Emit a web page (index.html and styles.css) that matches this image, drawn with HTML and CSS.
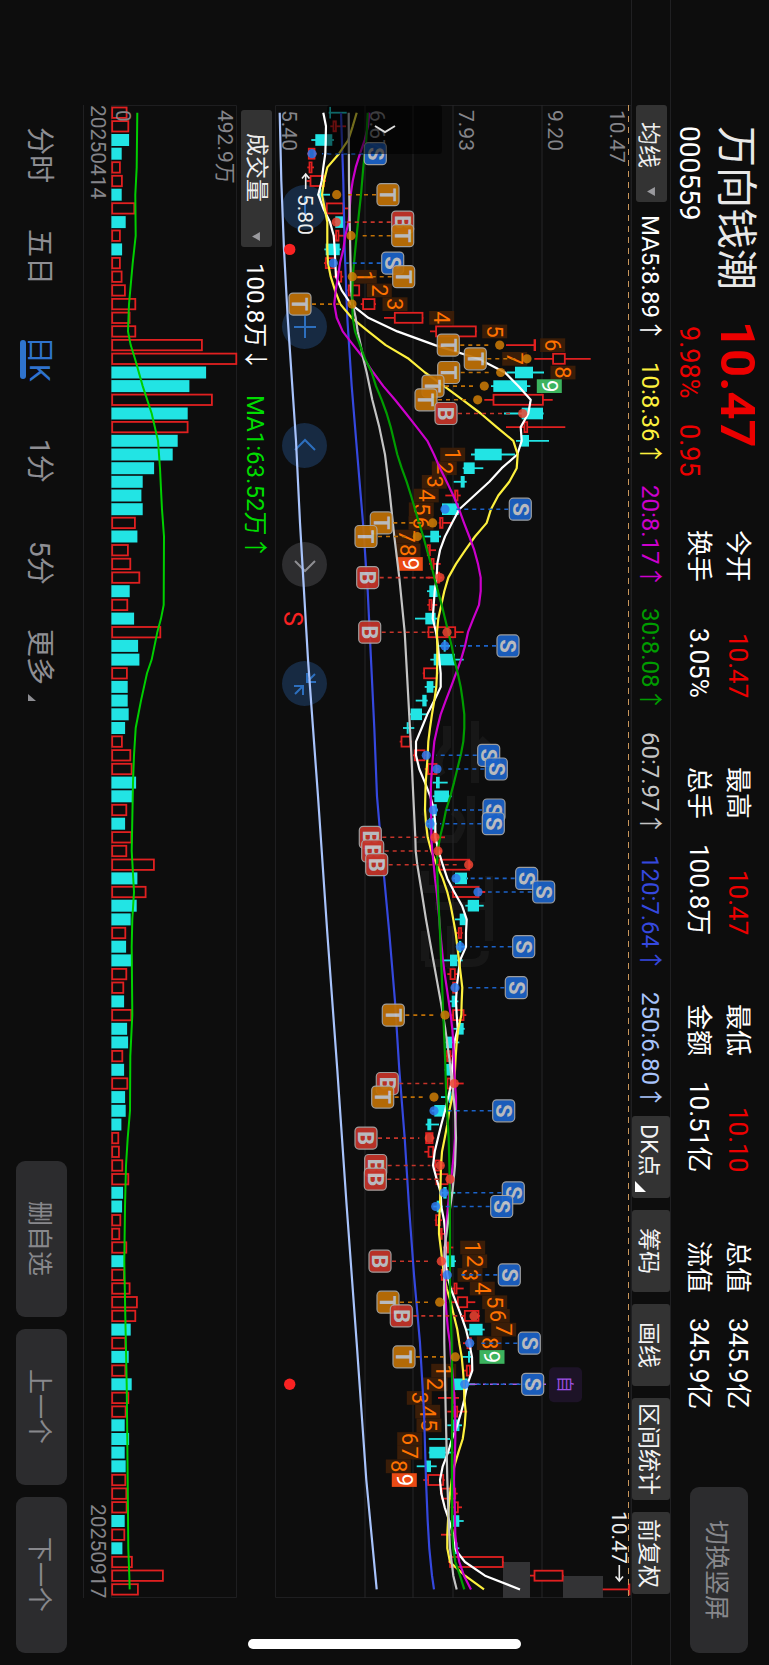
FILE: index.html
```html
<!DOCTYPE html>
<html lang="zh-CN">
<head>
<meta charset="utf-8">
<meta name="viewport" content="width=device-width, initial-scale=1">
<title>万向钱潮 000559</title>
<link rel="stylesheet" href="styles.css">
</head>
<body>
<main class="screen">
  <header class="quote">
    <div class="identity">
      <h1 class="name">万向钱潮</h1>
      <strong class="price">10.47</strong>
      <span class="code">000559</span>
      <span class="change"><span>9.98%</span><span>0.95</span></span>
    </div>
    <dl class="stats">
      <div class="stat"><dt>今开</dt><dd class="up">10.47</dd></div>
      <div class="stat"><dt>换手</dt><dd>3.05%</dd></div>
      <div class="stat"><dt>最高</dt><dd class="up">10.47</dd></div>
      <div class="stat"><dt>总手</dt><dd>100.8万</dd></div>
      <div class="stat"><dt>最低</dt><dd class="up">10.10</dd></div>
      <div class="stat"><dt>金额</dt><dd>10.51亿</dd></div>
      <div class="stat"><dt>总值</dt><dd>345.9亿</dd></div>
      <div class="stat"><dt>流值</dt><dd>345.9亿</dd></div>
    </dl>
    <button class="soft-button rotate-button" type="button">切换竖屏</button>
  </header>

  <section class="toolbar">
    <button class="picker" type="button" aria-haspopup="true">均线<svg class="caret" viewBox="0 0 7 8"><path d="M0 4 7 0V8Z"/></svg></button>
    <div class="averages">
      <span class="ma5">MA5:8.89<i>↑</i></span>
      <span class="ma10">10:8.36<i>↑</i></span>
      <span class="ma20">20:8.17<i>↑</i></span>
      <span class="ma30">30:8.08<i>↑</i></span>
      <span class="ma60">60:7.97<i>↑</i></span>
      <span class="ma120">120:7.64<i>↑</i></span>
      <span class="ma250">250:6.80<i>↑</i></span>
    </div>
    <div class="tools">
      <button class="tool has-corner" type="button">DK点<svg class="corner" viewBox="0 0 11 11"><path d="M0 0V11H11Z"/></svg></button>
      <button class="tool" type="button">筹码</button>
      <button class="tool" type="button">画线</button>
      <button class="tool" type="button">区间统计</button>
      <button class="tool" type="button">前复权</button>
    </div>
  </section>

  <section class="plot price-plot">
    <div class="chart-controls">
      <button class="round" type="button" aria-label="缩小"><svg viewBox="0 0 24 24"><path d="M12 1V23"/></svg></button>
      <button class="round" type="button" aria-label="放大"><svg viewBox="0 0 24 24"><path d="M12 1V23M1 12H23"/></svg></button>
      <button class="round" type="button" aria-label="左移"><svg viewBox="0 0 24 24"><path d="M2 16 12 6 22 16"/></svg></button>
      <button class="round idle" type="button" aria-label="右移"><svg viewBox="0 0 24 24"><path d="M2 8 12 18 22 8"/></svg></button>
      <button class="round" type="button" aria-label="收起"><svg viewBox="0 0 24 24"><path d="M14 1V10H23M22 2 14 10M1 14H10V23M2 22 10 14"/></svg></button>
    </div>
    <svg id="price" class="chart" viewBox="0 0 356 1493" role="img" aria-label="日K线"></svg>
    <button class="back" type="button" aria-label="返回"><svg viewBox="0 0 22 9"><path d="M1 1 11 7 21 1"/></svg></button>
  </section>

  <section class="volume-bar">
    <button class="picker wide" type="button" aria-haspopup="true">成交量<svg class="caret" viewBox="0 0 7 8"><path d="M0 4 7 0V8Z"/></svg></button>
    <span>100.8万<i>↓</i></span>
    <span class="vol-ma">MA1:63.52万<i>↑</i></span>
  </section>

  <section class="plot volume-plot">
    <svg id="volume" class="chart" viewBox="0 0 126 1493" role="img" aria-label="成交量"></svg>
  </section>

  <div class="dates"><time>20250414</time><time>20250917</time></div>

  <footer class="bottom">
    <nav class="tabs">
      <button class="tab" type="button">分时</button>
      <button class="tab" type="button">五日</button>
      <button class="tab active" type="button">日K</button>
      <button class="tab" type="button">1分</button>
      <button class="tab" type="button">5分</button>
      <button class="tab" type="button">更多<svg class="more" viewBox="0 0 8 7"><path d="M0 0V7H8Z"/></svg></button>
    </nav>
    <div class="actions">
      <button class="soft-button" type="button">删自选</button>
      <button class="soft-button" type="button">上一个</button>
      <button class="soft-button" type="button">下一个</button>
    </div>
  </footer>
  <div class="home-indicator"></div>
</main>
<script src="chart.js"></script>
</body>
</html>
```

FILE: styles.css
```css
* { box-sizing: border-box; }

body {
  margin: 0;
  background: #0d0d0d;
  color: #fff;
  font-family: Roboto, "Noto Sans CJK SC", sans-serif;
}

.screen {
  position: relative;
  writing-mode: vertical-rl;
  text-orientation: sideways;
  display: flex;
  flex-direction: column;
  width: 100vw;
  height: 100vh;
  overflow: hidden;
}

button {
  border: 0;
  margin: 0;
  padding: 0;
  background: none;
  color: inherit;
  font: inherit;
  writing-mode: vertical-rl;
  text-orientation: sideways;
  white-space: nowrap;
}

h1, dl, dd { margin: 0; }
i { font-family: "Noto Sans CJK SC", sans-serif; font-style: normal; }

/* quote header */
.quote {
  flex: none;
  display: flex;
  width: 99px;
  padding-inline: 126px 12px;
  border-left: 1px solid #202022;
}
.identity {
  flex: none;
  display: grid;
  grid-template-columns: 195px 1fr;
  grid-template-rows: 58px 36px;
  width: 98px;
  height: 404px;
  padding-right: 4px;
  white-space: nowrap;
}
.name { font-size: 41px; font-weight: 400; line-height: 58px; color: #e8e8e8; }
.price { font-size: 49px; line-height: 56px; color: #ec0000; }
.code { font-size: 28px; line-height: 36px; }
.change { display: flex; gap: 26px; padding-top: 5px; font-size: 27px; line-height: 36px; color: #ec0000; }
.stats {
  flex: 1;
  display: grid;
  grid-auto-flow: column;
  grid-template-columns: repeat(4, 168px);
  grid-template-rows: 39px 39px;
  justify-content: space-between;
  align-content: start;
  padding-right: 12px;
  font-size: 26px;
  line-height: 39px;
  white-space: nowrap;
}
.stat { display: flex; justify-content: space-between; }
.up { color: #ec0000; }
.soft-button {
  border-radius: 9px;
  background: #2c2c2e;
  color: #88888c;
  font-size: 25px;
}
.rotate-button { flex: none; width: 58px; height: 166px; margin: 78px 21px 0 0; }

/* indicator toolbar */
.toolbar {
  flex: none;
  display: flex;
  align-items: center;
  width: 39px;
  padding-inline: 105px 71px;
  border-left: 1px solid #202022;
}
.picker {
  flex: none;
  display: flex;
  align-items: center;
  justify-content: space-between;
  width: 31px;
  height: 97px;
  padding-block: 0;
  padding-inline: 17px 6px;
  border-radius: 3px;
  background: #333;
  color: #eee;
  font-size: 23px;
}
.picker.wide { height: 137px; padding-inline: 23px 6px; }
.caret { width: 8px; height: 9px; fill: #9a9a9e; }
.averages {
  flex: 1;
  display: flex;
  justify-content: space-between;
  padding-inline: 13px 7px;
  font-size: 24px;
  line-height: 38px;
  white-space: nowrap;
}
.ma10 { color: #fdf03e; }
.ma20 { color: #cc00cc; }
.ma30 { color: #009c00; }
.ma60 { color: #c4c4c4; }
.ma120 { color: #3548de; }
.ma250 { color: #a8c3fb; }
.tools { display: flex; gap: 12px; }
.tool {
  position: relative;
  min-height: 82px;
  width: 38px;
  padding-inline: 5px;
  border-radius: 3px;
  background: #333;
  color: #f2f2f2;
  font-size: 23px;
}
.has-corner { padding-inline: 5px 18px; }
.corner { position: absolute; left: 3px; bottom: 6px; width: 11px; height: 11px; fill: #fff; }

/* plots */
.plot { position: relative; min-width: 0; padding-inline: 105px 67px; }
.price-plot { flex: 356 1 0; }
.volume-plot { flex: 126 1 0; }
.chart {
  position: relative;
  display: block;
  width: 100%;
  height: 100%;
  writing-mode: horizontal-tb;
  overflow: visible;
}
.chart-controls {
  position: absolute;
  left: 7px;
  top: 185px;
  display: flex;
  gap: 74px;
}
.round {
  display: grid;
  place-items: center;
  width: 45px;
  height: 45px;
  border-radius: 50%;
  background: #172a42;
}
.round svg { width: 24px; height: 24px; fill: none; stroke: #2d6fbe; stroke-width: 2; }
.round.idle { background: #2d2d2f; }
.round.idle svg { stroke: #8e8e93; }
.back {
  position: absolute;
  left: 52px;
  top: 105px;
  display: grid;
  place-items: center;
  width: 115px;
  height: 49px;
  border-radius: 3px;
  background: rgba(0, 0, 0, 0.55);
}
.back svg { width: 22px; height: 9px; fill: none; stroke: #ddd; stroke-width: 2; }

.grid { stroke: #262628; stroke-width: 1; }
.edge { fill: none; stroke: #1e1e20; }
.limit { stroke: #c9965a; stroke-width: 1; stroke-dasharray: 6 5; }
.mark { fill: none; stroke: #171717; stroke-width: 8; }
.axis { fill: #85858a; font-size: 21px; }
.note { fill: #eee; font-size: 21px; }
.line { fill: none; stroke: currentColor; stroke-width: 2.2; stroke-linejoin: round; }
.line.ma5 { color: #fff; }
.up-bar { fill: #0d0d0d; stroke: #e02020; stroke-width: 1.8; }
.up-wick { stroke: #e02020; stroke-width: 1.8; }
.down-bar { fill: #22e4e4; }
.down-wick { stroke: #22e4e4; stroke-width: 1.8; }
.gap-box { fill: #333335; }
.count-box { fill: #3a1d08; }
.count-top { fill: #3cb35e; }
.count-bottom { fill: #ea4a14; }
.count { fill: #ff7200; font-size: 22px; text-anchor: middle; }
.count.end { fill: #fff; }
.S { fill: #1b62c8; stroke: #1b62c8; }
.B { fill: #c4342a; stroke: #c4342a; }
.T { fill: #bf7006; stroke: #bf7006; }
.lead { stroke-width: 1.6; stroke-dasharray: 4 4; }
.tag { stroke: #a8a8a8; stroke-width: 1.2; }
.dot { opacity: 0.85; stroke: none; }
.dot.S { fill: #2f7bf0; }
.dot.B { fill: #ee4432; }
.dot.T { fill: #cf7c06; }
.tag-text { fill: #c6c8cc; font-size: 22px; font-weight: 700; text-anchor: middle; }
.own-box { fill: #1d1327; }
.own-text { fill: #9c50e4; font-size: 17px; text-anchor: middle; }
.own-line { stroke: #a35be8; stroke-width: 1.6; stroke-dasharray: 9 4 3 4; }
.event { fill: #f92222; font-size: 25px; text-anchor: middle; }
.vol-line { fill: none; stroke: #00cf00; stroke-width: 2; }

/* volume header */
.volume-bar {
  flex: none;
  display: flex;
  align-items: center;
  gap: 16px;
  width: 38px;
  padding-inline-start: 110px;
  font-size: 24px;
  line-height: 38px;
}
.vol-ma { margin-top: 8px; color: #00dc00; }

.dates {
  flex: none;
  display: flex;
  justify-content: space-between;
  width: 28px;
  margin-inline: 105px 67px;
  border-left: 1px solid #202022;
  color: #85858a;
  font-size: 21px;
  line-height: 27px;
}

/* bottom navigation */
.bottom {
  flex: none;
  display: flex;
  align-items: center;
  justify-content: space-between;
  width: 83px;
  padding-inline: 104px 12px;
}
.tabs { display: flex; }
.tab {
  position: relative;
  display: flex;
  align-items: center;
  justify-content: center;
  width: 83px;
  height: 102px;
  color: #8e8e93;
  font-size: 28px;
}
.tab.active { color: #2f73cd; }
.tab.active::after {
  content: "";
  position: absolute;
  left: 20px;
  top: 0;
  bottom: 0;
  width: 6px;
  height: 39px;
  margin: auto 0;
  border-radius: 3px;
  background: #2f73cd;
}
.more { align-self: center; width: 8px; height: 7px; margin: 8px 20px 0 0; fill: #8e8e93; }
.actions { display: flex; gap: 12px; }
.actions .soft-button { width: 51px; height: 156px; }

.home-indicator {
  position: absolute;
  left: 0;
  right: 0;
  bottom: 16px;
  width: 273px;
  height: 10px;
  margin: 0 auto;
  border-radius: 5px;
  background: #fff;
}
```

FILE: chart.js
```js
// Prices are stored in thirds of a pixel along the price axis; rows are trading days.
const X = u => u / 3 - 35;
const Y = i => 7.67 + 13.673 * i;
const f = n => n.toFixed(1);
const label = (cls, x, y, text, size = 21) =>
  `<text class="${cls}" transform="translate(${f(x - size * 0.355)} ${f(y)}) rotate(90)">${text}</text>`;

// [direction, low, body start, body end, high]
const candles = `c 266 268 273 320|r 271 278 290 318|c 214 226 277 282|r 202 204 226 230|r 202 206 217 222|r 200 209 254 258|c 232 240 244 270|r 258 258 312 325|c 284 286 312 316|r 280 286 298 312|c 253 257 299 303|r 252 255 287 292|r 280 290 306 310|r 322 324 360 360|r 362 367 406 408|r 432 462 550 550|r 570 586 710 710|r 798 881 883 884|r 883 937 977 1052|c 800 825 879 912|c 753 760 861 871|r 733 758 911 938|c 792 845 909 911|r 798 851 864 976|c 828 842 867 927|c 693 704 785 825|c 668 671 704 730|c 641 662 674 680|r 616 643 655 662|c 604 606 656 658|r 596 598 610 633|c 553 571 597 603|r 558 561 572 588|r 567 572 583 602|r 557 587 600 607|c 561 568 593 597|r 562 566 577 592|c 525 556 587 592|r 560 563 648 671|c 598 611 617 630|c 571 581 645 671|r 548 550 593 595|c 554 560 580 587|c 527 547 560 563|c 506 512 546 560|c 489 500 506 523|r 479 482 513 516|r 519 522 556 560|r 554 562 592 596|c 578 588 599 623|c 578 583 627 635|c 570 576 590 594|c 560 568 583 590|r 575 580 590 615|r 586 588 600 606|r 594 596 690 694|c 640 645 681 684|r 635 637 718 736|c 676 683 717 731|c 645 659 677 681|r 645 654 666 668|c 650 657 664 675|c 610 630 652 668|r 622 629 647 655|r 634 637 653 656|c 628 635 647 655|r 634 637 673 679|c 640 654 671 674|c 616 617 636 658|r 615 619 634 637|c 614 618 634 636|r 615 620 634 671|c 603 627 634 636|c 575 583 615 618|c 557 562 574 597|r 555 556 580 583|r 553 563 582 586|r 582 584 603 612|r 583 587 625 635|c 600 610 620 646|c 580 590 604 608|r 584 586 602 606|r 596 601 603 612|r 610 620 628 640|c 612 618 644 648|r 600 603 625 630|r 636 641 652 671|r 635 651 684 706|r 660 672 718 720|c 680 688 728 734|r 669 680 695 697|c 667 684 690 697|r 670 678 692 697|c 638 641 683 705|r 594 636 646 657|r 622 640 654 682|c 622 638 658 666|c 566 618 620 630|c 566 568 617 640|c 530 558 573 590|r 550 562 612 614|r 600 603 648 653|r 632 642 656 666|c 632 637 658 671|r 603 637 642 645|c 640 644 652 658|r 625 628 791 791|r 870 881 970 971|r 1088 1164 1166 1166`
  .split('|').map(s => s.split(' ').map((v, k) => (k ? +v : v)));

const averages = {
  ma250: '0:119 5:124 10:132 15:143 20:157 24:168 30:180 40:204 50:234 60:262 70:292 80:320 90:350 100:379 108:410',
  ma120: '0:303 5:310 10:314 15:322 20:335 25:352 30:369 35:383 40:393 45:403 50:411 54:425 60:448 65:465 70:478 75:494 80:507 85:522 90:540 95:552 100:558 103:563 105:568 107:576 108:582',
  ma5: '0:250 1:258 2:257 3:256 4:250 5:245 6:235 7:250 8:270 9:281 10:284 11:286 12:288 13:305 14:333 15:385 16:472 17:585 18:715 19:795 20:835 21:872 22:865 23:842 24:845 25:832 26:785 27:748 28:703 29:658 30:636 31:615 32:600 33:592 34:590 35:584 36:581 37:578 38:588 39:594 40:598 41:602 42:602 43:583 44:562 45:545 46:528 47:528 48:538 49:555 50:571 51:582 52:586 53:586 54:596 55:608 56:622 57:643 58:666 59:680 60:678 61:678 62:660 63:655 64:650 65:648 66:650 67:653 68:643 69:640 70:636 71:634 72:625 73:615 74:604 75:594 76:584 77:579 78:590 79:602 80:604 81:612 82:616 83:617 84:616 85:622 86:632 87:648 88:664 89:678 90:688 91:696 92:697 93:682 94:674 95:664 96:652 97:636 98:624 99:608 100:600 101:604 102:614 103:628 104:640 105:643 106:675 107:735 108:840',
  ma10: '0:350 1:338 2:325 3:297 4:262 5:252 6:246 7:254 8:262 9:262 10:262 11:264 12:272 13:285 14:301 15:335 16:385 17:437 18:506 19:555 20:612 21:668 22:722 23:770 24:820 25:833 26:830 27:808 28:775 29:753 30:740 31:705 32:676 33:648 34:625 35:613 36:604 37:595 38:591 39:592 40:592 41:591 42:589 43:583 44:576 45:570 46:565 47:563 48:560 49:557 50:556 51:555 52:558 53:563 54:574 55:590 56:608 57:622 58:632 59:640 60:647 61:652 62:657 63:662 64:667 65:665 66:664 67:655 68:650 69:647 70:645 71:642 72:637 73:628 74:622 75:614 76:606 77:603 78:602 79:601 80:600 81:597 82:597 83:602 84:607 85:612 86:620 87:632 88:642 89:652 90:658 91:665 92:669 93:672 94:673 95:677 96:674 97:668 98:655 99:643 100:635 101:630 102:626 103:624 104:622 105:622 106:630 107:675 108:732',
  ma20: '0:388 1:384 2:374 3:360 4:347 5:338 6:332 7:329 8:326 9:316 10:310 11:300 12:294 13:287 14:283 15:290 16:308 17:340 18:372 19:400 20:430 21:465 22:498 23:530 24:562 25:582 26:600 27:620 28:640 29:657 30:672 31:688 32:703 33:714 34:722 35:722 36:717 37:700 38:684 39:675 40:663 41:648 42:633 43:617 44:602 45:592 46:583 47:579 48:576 49:573 50:572 51:573 52:574 53:574 54:577 55:581 56:585 57:590 58:594 59:598 60:601 61:605 62:609 63:614 64:620 65:626 66:632 67:637 68:640 69:641 70:643 71:645 72:648 73:648 74:646 75:645 76:642 77:638 78:633 79:628 80:624 81:620 82:618 83:615 84:613 85:614 86:616 87:617 88:620 89:624 90:630 91:633 92:637 93:640 94:643 95:645 96:646 97:646 98:645 99:643 100:642 101:643 102:644 103:645 104:646 105:650 106:658 107:672 108:693',
  ma60: '0:326 5:327 9:330 13:333 14:338 15:347 16:353 17:362 18:370 19:380 21:397 23:418 25:435 28:450 31:463 34:478 38:494 42:503 46:512 50:520 53:526 54:527 55:532 57:545 59:558 62:580 65:602 67:616 69:627 71:637 73:645 75:648 77:645 79:637 81:625 83:614 86:612 90:613 95:617 98:620 100:622 103:626 105:630 107:640 108:650',
  ma30: '0:383 2:379 4:370 6:363 8:354 10:346 12:338 14:337 15:338 16:345 17:360 18:375 19:395 20:408 21:425 22:440 23:452 24:462 25:472 26:485 27:500 28:513 29:525 30:537 31:550 32:561 33:573 34:583 35:594 36:605 37:615 38:625 39:635 40:643 41:653 42:662 43:668 44:673 45:673 46:670 47:662 48:652 49:642 50:631 51:618 52:610 53:600 54:593 55:591 57:594 60:600 63:605 66:610 69:615 72:619 75:626 78:629 82:630 86:630 90:635 94:637 98:636 102:636 104:637 105:640 106:646 107:660 108:673'
};

// letter, day, tag position, dot position
const signals = 'S 3 406 216|T 6 444 290|B 8 488 289|T 9 488 333|S 11 458 280|T 12 491 337|T 14 180 336|T 17 625 779|T 18 706 861|T 19 626 782|T 20 579 733|T 21 558 713|B 22 618 848|S 29 841 615|T 30 424 578|T 31 378 532|B 34 383 600|B 38 389 621|S 39 804 615|S 47 746 559|S 48 769 591|S 51 762 580|S 52 760 570|B 53 391 585|B 54 398 594|B 55 410 686|S 56 860 648|S 57 911 714|S 61 851 661|S 64 829 645|T 66 460 615|B 71 442 643|T 72 428 582|S 73 791 582|B 75 378 568|B 77 407 601|B 78 406 630|S 79 820 612|S 80 785 587|B 84 420 604|S 85 808 622|T 87 444 599|B 88 484 702|S 90 868 689|T 91 492 646|S 93 878 674';

// first day of each run, colour of its ninth box, positions of 1 to 9
const counts = [
  [12, 'count-top', [373, 418, 465, 605, 764, 938, 824, 969, 928]],
  [25, 'count-bottom', [638, 613, 583, 559, 544, 543, 499, 504, 511]],
  [83, 'count-top', [698, 704, 690, 727, 764, 772, 791, 748, 756]],
  [92, 'count-bottom', [611, 585, 538, 563, 567, 509, 509, 475, 493]]
];

let out = '<path class="edge" d="M0.5 1492.5V0.5H356V1492.5Z"/>';
out += '<path class="mark" transform="translate(0 66)" d="M172 555V575Q158 590 167 604M200 550V612M205 568 218 580M148 640Q166 650 150 668H180Q194 650 178 640M196 625V690M150 700V718H205M160 735H215M214 705V770M150 792H196Q210 792 210 780M150 760V790M176 755V798"/>';
for (const x of [90, 138, 178, 267]) out += `<path class="grid" d="M${x} 0V1493"/>`;
[['10.47', 342], ['9.20', 280], ['7.93', 191.7], ['6.67', 102.7], ['5.40', 14]].forEach(([t, x]) => { out += label('axis', x, 5, t); });
out += '<rect class="gap-box" x="228" y="1457" width="27" height="36"/><rect class="gap-box" x="288" y="1471" width="40" height="22"/>';

candles.forEach(([dir, lo, a, b, hi], i) => {
  const kind = dir === 'r' ? 'up' : 'down';
  const y = Y(i), inset = dir === 'r' ? 0.8 : 0;
  out += `<path class="${kind}-wick" d="M${f(X(lo))} ${f(y)}H${f(X(hi))}"/>`;
  out += `<rect class="${kind}-bar" x="${f(X(a) + inset)}" y="${f(y - 5.8 + inset)}" width="${f(Math.max((b - a) / 3 - 2 * inset, 0.6))}" height="${f(11.6 - 2 * inset)}"/>`;
});

for (const [start, last, row] of counts) {
  row.forEach((u, k) => {
    const y = Y(start + k), end = k === 8;
    out += `<rect class="${end ? last : 'count-box'}" x="${f(X(u) - 12.5)}" y="${f(y - 6.8)}" width="25" height="13.7"/>`;
    out += label(end ? 'count end' : 'count', X(u), y, k + 1, 22);
  });
}

const path = (text, x) => 'M' + text.split(' ').map(p => {
  const [i, u] = p.split(':').map(Number);
  return `${f(x(u))} ${f(Y(i))}`;
}).join('L');
for (const [name, pts] of Object.entries(averages)) out += `<path class="line ${name}" d="${path(pts, X)}"/>`;

out += `<path class="own-line" d="M${f(X(690))} ${f(Y(93))}H${f(X(930))}"/>`;
signals.split('|').forEach(s => {
  const [c, i, tag, dot] = s.split(' ');
  const y = Y(+i), x = X(+tag);
  const side = +tag > +dot ? -1 : 1;
  out += `<path class="lead ${c}" d="M${f(x + side * 12)} ${f(y)}H${f(X(+dot) - side * 10)}"/>`;
  out += `<circle class="dot ${c}" cx="${f(X(+dot))}" cy="${f(y)}" r="4.6"/>`;
  out += `<g opacity="0.93"><rect class="${c} tag" x="${f(x - 11)}" y="${f(y - 11)}" width="22" height="22" rx="4"/>${label('tag-text', x, y, c, 22)}</g>`;
});
out += `<rect class="own-box" x="${f(X(927))}" y="${f(Y(93) - 17)}" width="33" height="35" rx="5"/>${label('own-text', X(976), Y(93), '自', 17)}`;

out += label('note', X(197), 89, '5.80') + label('note', X(1138), 1406, '10.47');
out += '<path d="M30.700 69V84M27 73.500 30.700 69 34.400 73.500M344.300 1460V1476M340.600 1471.500 344.300 1476 348 1471.500" fill="none" stroke="#eee" stroke-width="1.600"/>';
for (const i of [10, 93]) out += `<circle class="event" cx="${f(X(149))}" cy="${f(Y(i))}" r="5.700"/>`;
out += label('event', X(158), Y(37), 'S', 25);
out += '<path class="limit" d="M353.500 0V1493"/>';
document.getElementById('price').innerHTML = out;

const volumes = 'r382 r387 c387 c365 r362 r368 c365 r405 c377 r362 c366 r362 r367 r377 r408 r391 r408 r608 r711 c618 c568 r638 c563 r565 c533 c518 c462 c428 c424 c428 r407 c412 r386 r393 r420 c389 r384 c402 r483 c414 c418 r383 c383 c383 c386 c375 r368 r393 r397 c408 c397 r381 c375 r396 r381 r464 c412 r439 c410 c392 r378 c378 c394 r381 r372 c372 r396 c381 c384 r369 c372 r384 c375 c377 c364 r357 r359 r369 r387 c369 c366 r363 r360 r381 c373 r374 r391 r413 r408 c392 r378 c386 r378 c395 r387 r379 c374 c387 c374 c377 r378 r381 r382 c374 r375 c367 r398 r491 r416'.split(' ');
const average = '0:412 4:410 6:406 9:407 11:398 14:387 16:384 17:392 18:405 20:428 22:455 24:474 26:480 28:484 29:486 31:492 36:491 37:483 38:472 40:455 41:441 43:423 45:407 47:402 49:399 54:395 57:402 59:397 61:395 66:397 69:391 73:390 75:383 77:378 80:375 84:373 88:376 93:380 97:382 105:385 107:388 108:389';
let vol = '<path class="edge" d="M0.500 0.500H125.500V1492.500H0.500Z"/>' + label('axis', 114, 5, '492.9万');
volumes.forEach((v, i) => {
  const red = v[0] === 'r', inset = red ? 0.8 : 0;
  vol += `<rect class="${red ? 'up' : 'down'}-bar" x="${f(0.4 + inset)}" y="${f(Y(i) - 6 + inset)}" width="${f((v.slice(1) - 334) / 3 - 2 * inset)}" height="${f(12 - 2 * inset)}"/>`;
});
vol += label('axis', 12.500, 5, '0') + `<path class="vol-line" d="${path(average, v => v / 3 - 111)}"/>`;
document.getElementById('volume').innerHTML = vol;
```
